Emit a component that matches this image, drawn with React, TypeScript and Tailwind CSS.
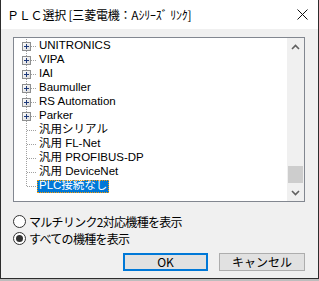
import React from "react";

type TreeItem = {
  label: string;
  expandable?: boolean;
  selected?: boolean;
  last?: boolean;
};

const items: TreeItem[] = [
  { label: "UNITRONICS", expandable: true },
  { label: "VIPA", expandable: true },
  { label: "IAI", expandable: true },
  { label: "Baumuller", expandable: true },
  { label: "RS Automation", expandable: true },
  { label: "Parker", expandable: true },
  { label: "汎用シリアル" },
  { label: "汎用 FL-Net" },
  { label: "汎用 PROFIBUS-DP" },
  { label: "汎用 DeviceNet" },
  { label: "PLC接続なし", selected: true, last: true },
];

const uiFont = {
  fontFamily: '"Noto Sans CJK JP", "Liberation Sans", sans-serif',
};

// Dotted tree connector + optional expand box for one row
function Connector({ item }: { item: TreeItem }) {
  return (
    <svg width="23" height="14" className="shrink-0" shapeRendering="crispEdges">
      <line
        x1="12.5"
        y1="0"
        x2="12.5"
        y2={item.last ? 7 : 14}
        stroke="#a0a0a0"
        strokeDasharray="1 1"
      />
      <line
        x1={item.expandable ? 17 : 13}
        y1="7.5"
        x2="23"
        y2="7.5"
        stroke="#a0a0a0"
        strokeDasharray="1 1"
      />
      {item.expandable && (
        <>
          <defs>
            <linearGradient id="pb" x1="0" y1="0" x2="1" y2="1">
              <stop offset="0" stopColor="#ffffff" />
              <stop offset="1" stopColor="#d8d8d8" />
            </linearGradient>
          </defs>
          <rect x="8.5" y="3.5" width="8" height="8" fill="url(#pb)" stroke="#8e8f8f" />
          <line x1="10" y1="7.5" x2="15" y2="7.5" stroke="#1f3a7a" />
          <line x1="12.5" y1="5" x2="12.5" y2="10" stroke="#1f3a7a" />
        </>
      )}
    </svg>
  );
}

function Radio({ checked, label }: { checked?: boolean; label: string }) {
  return (
    <div className="flex h-[17px] items-center gap-[3px]">
      <span className="flex h-[13px] w-[13px] items-center justify-center rounded-full border border-[#333333] bg-white">
        {checked && <span className="h-[7px] w-[7px] rounded-full bg-[#333333]" />}
      </span>
      <span className="text-[12px] leading-none tracking-[-0.7px] text-black" style={uiFont}>
        {label}
      </span>
    </div>
  );
}

export default function App() {
  return (
    <div className="h-[281px] w-[319px] bg-[#bdbdbd]">
      <div className="flex h-[279px] w-[319px] flex-col border-x border-b border-[#2d2d2d] bg-[#f0f0f0]">
        {/* Title bar */}
        <div className="flex h-[29px] shrink-0 items-center justify-between bg-white pl-[6px] pr-[10px]">
          <span className="text-[12px] tracking-[-0.2px] text-black" style={uiFont}>
            ＰＬＣ選択 [三菱電機：Aｼﾘｰｽﾞ ﾘﾝｸ]
          </span>
          <svg width="11" height="11" viewBox="0 0 11 11">
            <path d="M0.5 0.5 L10.5 10.5 M10.5 0.5 L0.5 10.5" stroke="#111" strokeWidth="1" />
          </svg>
        </div>

        {/* Tree view */}
        <div className="ml-[12px] mt-[8px] flex h-[165px] w-[292px] border border-[#828790] bg-white">
          <div
            className="flex-1 overflow-hidden pt-[1px] text-[11.5px] text-black"
            style={{ fontFamily: '"Liberation Sans", "Noto Sans CJK JP", sans-serif' }}
          >
            {items.map((item) => (
              <div key={item.label} className="flex h-[14px] items-center">
                <Connector item={item} />
                {item.selected ? (
                  <span className="flex h-[13px] items-center bg-[#0078d7] px-[2px] leading-none text-white outline-1 outline-dotted outline-[#ff9c00] -outline-offset-1">
                    {item.label}
                  </span>
                ) : (
                  <span className="px-[2px] leading-none">{item.label}</span>
                )}
              </div>
            ))}
          </div>

          {/* Scrollbar */}
          <div className="flex w-[17px] flex-col bg-[#f0f0f0]">
            <div className="flex h-[17px] items-center justify-center">
              <svg width="9" height="6" viewBox="0 0 9 6">
                <path d="M1 5 L4.5 1.5 L8 5" fill="none" stroke="#606060" strokeWidth="1.6" />
              </svg>
            </div>
            <div className="flex flex-1 flex-col justify-end">
              <div className="mx-[1px] mb-[1px] h-[17px] bg-[#cdcdcd]" />
            </div>
            <div className="flex h-[17px] items-center justify-center">
              <svg width="9" height="6" viewBox="0 0 9 6">
                <path d="M1 1 L4.5 4.5 L8 1" fill="none" stroke="#606060" strokeWidth="1.6" />
              </svg>
            </div>
          </div>
        </div>

        {/* Radio options */}
        <div className="ml-[12px] mt-[11px] flex flex-col gap-0">
          <Radio label="マルチリンク2対応機種を表示" />
          <Radio checked label="すべての機種を表示" />
        </div>

        {/* Buttons */}
        <div className="mr-[13px] mt-[6px] flex justify-end gap-[11px]">
          <button
            className="h-[18px] w-[85px] border-2 border-[#0078d7] bg-[#e1e1e1] text-[12px] leading-none text-black"
            style={uiFont}
          >
            OK
          </button>
          <button
            className="h-[18px] w-[86px] border border-[#adadad] bg-[#e1e1e1] text-[12px] leading-none text-black"
            style={uiFont}
          >
            キャンセル
          </button>
        </div>
      </div>
    </div>
  );
}
